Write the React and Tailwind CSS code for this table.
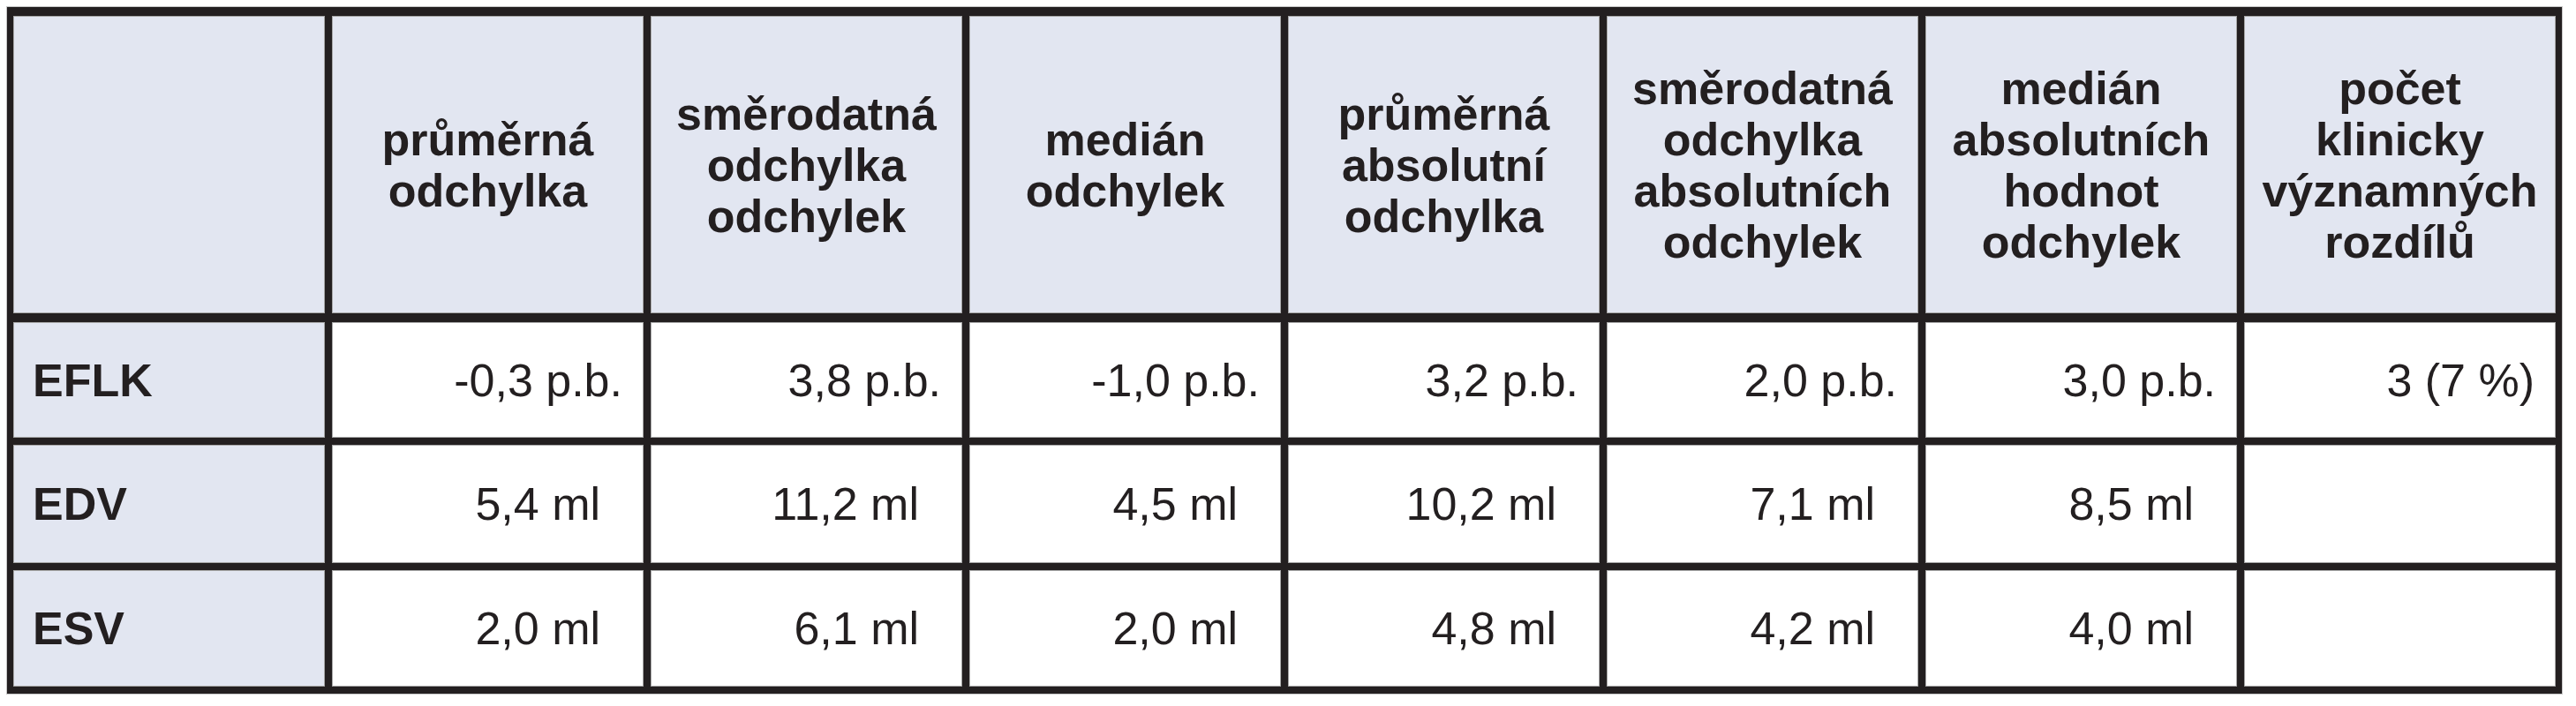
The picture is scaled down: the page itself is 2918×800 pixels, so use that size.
const headers = [
  "",
  "průměrná\nodchylka",
  "směrodatná\nodchylka\nodchylek",
  "medián\nodchylek",
  "průměrná\nabsolutní\nodchylka",
  "směrodatná\nodchylka\nabsolutních\nodchylek",
  "medián\nabsolutních\nhodnot\nodchylek",
  "počet\nklinicky\nvýznamných\nrozdílů",
];

const rows = [
  { label: "EFLK", h: "h-[131px]", mt: "mt-[10px]", unit: "pb", values: ["-0,3 p.b.", "3,8 p.b.", "-1,0 p.b.", "3,2 p.b.", "2,0 p.b.", "3,0 p.b.", "3 (7 %)"] },
  { label: "EDV", h: "h-[134px]", mt: "mt-[8px]", unit: "ml", values: ["5,4 ml", "11,2 ml", "4,5 ml", "10,2 ml", "7,1 ml", "8,5 ml", ""] },
  { label: "ESV", h: "h-[132px]", mt: "mt-[8px]", unit: "ml", values: ["2,0 ml", "6,1 ml", "2,0 ml", "4,8 ml", "4,2 ml", "4,0 ml", ""] },
];

export default function App() {
  return (
    <div className="min-h-[800px] bg-white pt-[7px] pl-[7px] text-[#231f20]" style={{ fontFamily: '"Liberation Sans", Arial, sans-serif' }}>
      <div className="w-[2896px] border border-[#c8c8c8] bg-[#231f20] pt-[10px] pl-[7px] pr-[7px] pb-[8px]">
        {/* header */}
        <div className="grid grid-cols-[repeat(8,353px)] gap-x-[8px] h-[337px]">
          {headers.map((h, i) => (
            <div key={i} className="flex items-center justify-center border border-[#a7a7a7] bg-[#e2e6f1] text-center text-[52px] leading-[58px] font-bold whitespace-pre-line">
              {h}
            </div>
          ))}
        </div>

        {/* body */}
        {rows.map((r) => (
          <div key={r.label} className={`grid grid-cols-[repeat(8,353px)] gap-x-[8px] ${r.h} ${r.mt}`}>
            <div className="flex items-center border border-[#a7a7a7] bg-[#e2e6f1] pl-[21px] text-[52px] leading-[58px] font-bold">
              {r.label}
            </div>
            {r.values.map((v, i) => (
              <div
                key={i}
                className={`flex items-center justify-end border border-[#a7a7a7] bg-white text-[52px] leading-[58px] ${r.unit === "ml" ? "pr-[48px]" : "pr-[23px]"}`}
              >
                {v}
              </div>
            ))}
          </div>
        ))}
      </div>
    </div>
  );
}
